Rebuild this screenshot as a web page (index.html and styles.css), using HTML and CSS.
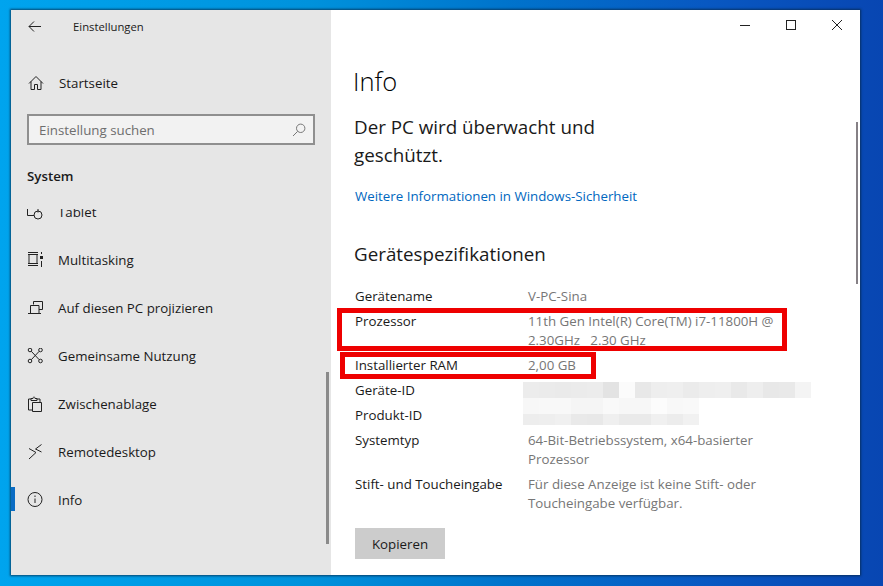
FILE: index.html
```html
<!DOCTYPE html>
<html lang="de">
<head>
<meta charset="utf-8">
<title>Einstellungen</title>
<link rel="stylesheet" href="styles.css">
</head>
<body>
<div class="window">
  <aside class="sidebar">
    <div class="titlebar">
      <svg class="back" width="16" height="14" viewBox="0 0 16 14"><path d="M14 6.500H2M7 1.500L2 6.500L7 11.500"/></svg>
      <span class="apptitle">Einstellungen</span>
    </div>
    <div class="home">
      <svg class="ico" width="16" height="16" viewBox="0 0 16 16"><path d="M1 8.500L8 1.500L15 8.500M3 6.500V14.500H6.500V9.500H9.500V14.500H13V6.500"/></svg>
      <span>Startseite</span>
    </div>
    <div class="search">
      <span>Einstellung suchen</span>
      <svg class="ico searchico" width="14" height="14" viewBox="0 0 14 14"><circle cx="8.700" cy="5.300" r="4.200"/><path d="M5.700 8.300L1 13"/></svg>
    </div>
    <div class="group">System</div>
    <nav class="navclip">
      <div class="nav">
        <div class="item">
          <svg class="ico" width="16" height="16" viewBox="0 0 16 16"><path d="M.5 1V11.500H7M11 5V8.500"/><circle cx="11" cy="11" r="4"/></svg>
          <span>Tablet</span>
        </div>
        <div class="item">
          <svg class="ico" width="16" height="16" viewBox="0 2 16 16"><path d="M1 2.500H11M1 4.500H11M1 13.500H11M1 15.500H11M2 4.500V13.500M10 4.500V13.500M14.500 2V4M14.500 11V17"/><rect class="fill" x="13" y="6" width="3" height="3"/></svg>
          <span>Multitasking</span>
        </div>
        <div class="item">
          <svg class="ico" width="16" height="16" viewBox="0 0 16 16"><path d="M6.500 4.500V1.500H15.500V9.500H12M1 13.500H14M3.500 13V5.500H12V13"/></svg>
          <span>Auf diesen PC projizieren</span>
        </div>
        <div class="item">
          <svg class="ico" width="16" height="16" viewBox="0 1 16 16"><circle cx="3" cy="3" r="1.800"/><circle cx="13.500" cy="3" r="1.800"/><circle cx="3" cy="14" r="1.800"/><circle cx="13.500" cy="14" r="1.800"/><path d="M4.300 4.300L12.200 12.700M12.200 4.300L4.300 12.700"/></svg>
          <span>Gemeinsame Nutzung</span>
        </div>
        <div class="item">
          <svg class="ico" width="16" height="16" viewBox="0 0 16 16"><path d="M4 3H1.500V14H5.500M10 3H13V6M4 4.500V2.500H6C6 .500 8 .500 8 2.500H10V4.500H4ZM5.500 6.500H14.500V15.500H5.500Z"/></svg>
          <span>Zwischenablage</span>
        </div>
        <div class="item">
          <svg class="ico" width="16" height="16" viewBox="0 0 16 16"><path d="M2 4.500L9 8.500L2 15M14.500 .5L8.500 5L14.500 8"/></svg>
          <span>Remotedesktop</span>
        </div>
        <div class="item active">
          <svg class="ico" width="16" height="16" viewBox="0 1 16 16"><circle cx="8" cy="8.500" r="7"/><path d="M8 7.500V12M8 4.500V6"/></svg>
          <span>Info</span>
        </div>
      </div>
      <div class="scroll-left"></div>
    </nav>
  </aside>
  <main class="content">
    <div class="winbtns">
      <svg width="12" height="12" viewBox="0 0 12 12"><path d="M1 6.500H11"/></svg>
      <svg width="12" height="12" viewBox="0 0 12 12"><rect x="1.500" y="1.500" width="9" height="9"/></svg>
      <svg width="12" height="12" viewBox="0 0 12 12"><path d="M1 1L11 11M11 1L1 11"/></svg>
    </div>
    <h1>Info</h1>
    <h2 class="status">Der PC wird überwacht und geschützt.</h2>
    <a class="link">Weitere Informationen in Windows-Sicherheit</a>
    <h2 class="spec">Gerätespezifikationen</h2>
    <dl class="specs">
      <dt>Gerätename</dt><dd>V-PC-Sina</dd>
      <dt>Prozessor</dt><dd>11th Gen Intel(R) Core(TM) i7-11800H @ 2.30GHz&nbsp;&nbsp; 2.30 GHz</dd>
      <dt>Installierter RAM</dt><dd>2,00 GB</dd>
      <dt>Geräte-ID</dt><dd></dd>
      <dt>Produkt-ID</dt><dd></dd>
      <dt>Systemtyp</dt><dd>64-Bit-Betriebssystem, x64-basierter Prozessor</dd>
      <dt>Stift- und Toucheingabe</dt><dd>Für diese Anzeige ist keine Stift- oder Toucheingabe verfügbar.</dd>
    </dl>
    <button class="copy">Kopieren</button>
    <div class="scroll-right"></div>
    <div class="mark mark-cpu"></div>
    <div class="mark mark-ram"></div>
    <div class="blur blur-device"></div>
    <div class="blur blur-prod-a"></div>
    <div class="blur blur-prod-b"></div>
  </main>
</div>
</body>
</html>
```
FILE: styles.css
```css
* { box-sizing: border-box; }
html, body { height: 100%; }
body {
  margin: 0;
  padding: 10px 23px 11px 11px;
  overflow: hidden;
  background: linear-gradient(90deg, #00a4ee 0%, #0092dc 35%, #0074cc 57%, #0858c2 80%, #0846b2 100%);
  font-family: "Open Sans", "Noto Sans", sans-serif;
  font-size: 13.300px;
  color: #1a1a1a;
}
.window {
  display: flex;
  height: 565px;
  box-shadow: 0 0 2px 1px rgba(8, 40, 70, .75);
  background: #fff;
}
.sidebar {
  width: 320px;
  flex: none;
  background: #e6e6e6;
  display: flex;
  flex-direction: column;
}
.ico, .back, .winbtns svg { fill: none; stroke: #222; stroke-width: 1; flex: none; }
.ico .fill { fill: #222; stroke: none; }
.titlebar {
  height: 33px;
  display: flex;
  align-items: center;
  padding-left: 16px;
}
.apptitle { margin-left: 30px; font-size: 11.300px; }
.home {
  height: 46px;
  margin-top: 17px;
  display: flex;
  align-items: center;
  gap: 15px;
  padding-left: 17px;
}
.search {
  margin: 8px 16px 0 16px;
  height: 31px;
  border: 2px solid #8f8f8f;
  background: #f2f2f2;
  color: #6e6e6e;
  display: flex;
  align-items: center;
  justify-content: space-between;
  padding: 0 7px 0 10px;
}
.searchico { stroke: #777; }
.group {
  margin: 20px 0 0 16px;
  height: 22px;
  font-weight: 600;
  line-height: 22px;
}
.navclip {
  position: relative;
  flex: 1;
  margin-top: 22px;
  overflow: hidden;
}
.nav { margin-top: -21px; }
.item {
  height: 48px;
  display: flex;
  align-items: center;
  gap: 15px;
  padding-left: 16px;
}
.active { position: relative; }
.active::before {
  content: "";
  position: absolute;
  left: 0;
  top: 11px;
  width: 4px;
  height: 24px;
  background: #0a6cc4;
}
.scroll-left {
  position: absolute;
  right: 2px;
  top: 163px;
  width: 3px;
  height: 172px;
  background: #8a8a8a;
}
.content {
  position: relative;
  flex: 1;
  padding-left: 23px;
  min-width: 0;
}
.winbtns {
  position: absolute;
  top: 9px;
  right: 17px;
  display: flex;
  gap: 34px;
}
h1 {
  margin: 53px 0 0 -1px;
  font-size: 25.500px;
  font-weight: 300;
  line-height: 36px;
  color: #000;
}
h2 {
  margin: 0;
  font-size: 18.800px;
  font-weight: 400;
  line-height: 28px;
}
.status { margin-top: 14px; width: 290px; }
.link {
  display: block;
  margin: 17px 0 0 1px;
  color: #0067c0;
  line-height: 20px;
}
.spec { margin-top: 34px; }
.specs {
  margin: 19px 0 0;
  display: grid;
  grid-template-columns: 173px 258px;
  row-gap: 6px;
  line-height: 19px;
  padding-left: 1px;
}
dt, dd { margin: 0; min-height: 19px; }
dd { color: #767676; }
.copy {
  display: block;
  margin: 15px 0 0 1px;
  width: 90px;
  height: 31px;
  border: 0;
  background: #cccccc;
  color: #1a1a1a;
  font: inherit;
}
.scroll-right {
  position: absolute;
  right: 2px;
  top: 112px;
  width: 2px;
  height: 162px;
  background: #858085;
}
.mark { position: absolute; border: 5px solid #ee0000; }
.mark-cpu { left: 6px; top: 298px; width: 450px; height: 43px; }
.mark-ram { left: 9px; top: 342px; width: 256px; height: 27px; }
.blur { position: absolute; left: 192px; }
.blur-device {
  top: 372px; width: 288px; height: 16px;
  background: linear-gradient(90deg,
    #ececec 0 16px, #ebebeb 16px 32px, #eaeaea 32px 48px, #ebebeb 48px 64px, #ececec 64px 80px,
    #e3e3e3 80px 96px, #fbfbfb 96px 112px, #e8e8e8 112px 128px, #eeeeee 128px 144px, #efefef 144px 160px,
    #ebebeb 160px 176px, #eeeeee 176px 192px, #efefef 192px 208px, #e9e9e9 208px 224px, #eeeeee 224px 240px,
    #e8e8e8 240px 256px, #e9e9e9 256px 272px, #f4f4f4 272px);
}
.blur-prod-a {
  top: 388px; width: 176px; height: 16px;
  background: linear-gradient(90deg,
    #f7f7f7 0 16px, #f8f8f8 16px 48px, #f5f5f5 48px 80px, #f9f9f9 80px 96px,
    #f7f7f7 96px 128px, #fcfcfc 128px 144px, #f8f8f8 144px 160px, #f9f9f9 160px);
}
.blur-prod-b {
  top: 404px; width: 176px; height: 11px;
  background: linear-gradient(90deg,
    #ededed 0 16px, #eeeeee 16px 32px, #f0f0f0 32px 48px, #e9e9e9 48px 64px, #e8e8e8 64px 80px,
    #efefef 80px 96px, #eaeaea 96px 128px, #f0f0f0 128px 144px, #ececec 144px 160px, #f1f1f1 160px);
}
```
